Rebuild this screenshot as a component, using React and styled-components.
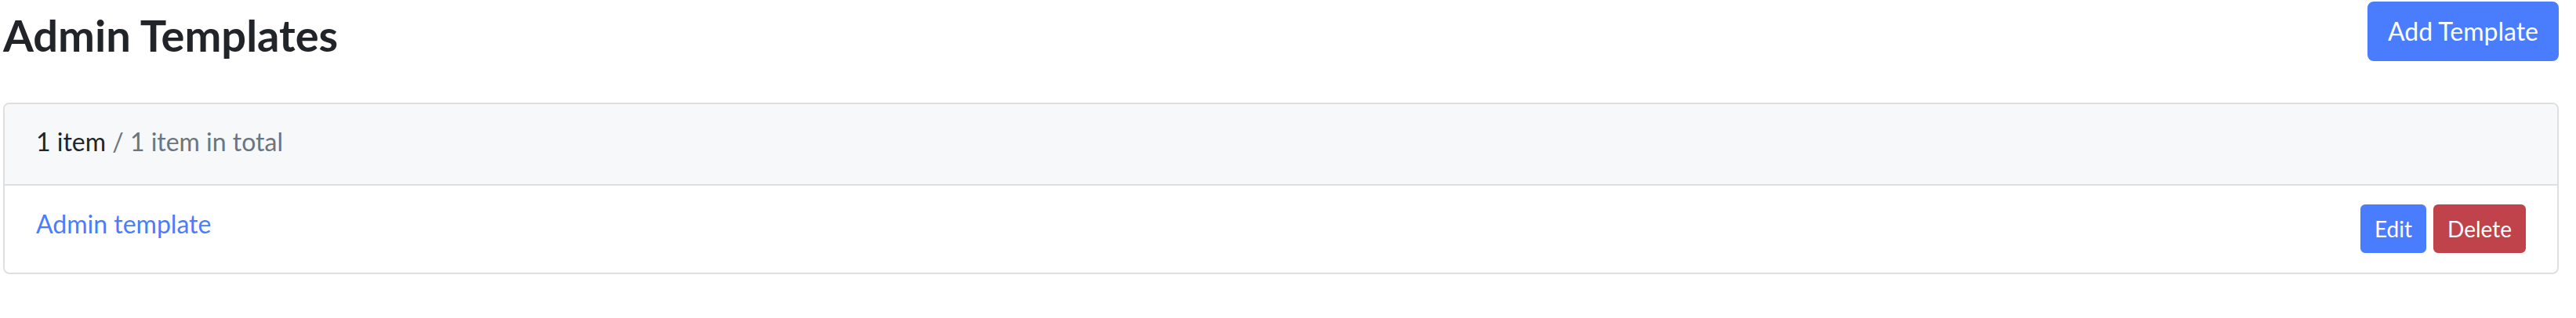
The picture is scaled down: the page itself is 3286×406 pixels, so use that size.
import React from 'react';
import styled, { createGlobalStyle } from 'styled-components';

const GlobalStyle = createGlobalStyle`
  html, body {
    margin: 0;
    padding: 0;
    background: #ffffff;
  }
  body {
    font-family: Lato, 'Open Sans', sans-serif;
    color: #212529;
  }
  * {
    box-sizing: border-box;
  }
`;

const Page = styled.div`
  padding: 2px 22px 0 4px;
`;

const TopBar = styled.div`
  display: flex;
  justify-content: space-between;
  align-items: flex-start;
  height: 129px;
`;

const Title = styled.h1`
  margin: 9px 0 0;
  font-size: 56px;
  font-weight: 700;
  line-height: 1.2;
  color: #212529;
`;

const Button = styled.button`
  font-family: inherit;
  color: #ffffff;
  background: ${(p) => (p.$variant === 'danger' ? '#c0424a' : '#4a7dfd')};
  border: 2px solid ${(p) => (p.$variant === 'danger' ? '#c0424a' : '#4a7dfd')};
  border-radius: ${(p) => (p.$small ? '6px' : '8px')};
  font-size: ${(p) => (p.$small ? '28px' : '32px')};
  line-height: 1.5;
  padding: ${(p) => (p.$small ? '8px 16px' : '12px 24px')};
  cursor: pointer;
`;

const Card = styled.div`
  border: 2px solid #dfdfdf;
  border-radius: 8px;
  overflow: hidden;
`;

const CardHeader = styled.div`
  background: #f7f8fa;
  border-bottom: 2px solid #dfdfdf;
  padding: 24px 40px 30px;
  font-size: 32px;
  line-height: 48px;
`;

const Muted = styled.span`
  color: #6c757d;
`;

const Row = styled.div`
  display: flex;
  justify-content: space-between;
  align-items: center;
  padding: 24px 40px 25px;
`;

const ItemLink = styled.a`
  color: #4a7dfd;
  font-size: 32px;
  line-height: 48px;
  padding-bottom: 12px;
  text-decoration: none;
`;

const Actions = styled.div`
  display: flex;
  gap: 9px;
`;

const templates = [{ id: 1, name: 'Admin template' }];

const App = () => {
  return (
    <Page>
      <GlobalStyle />
      <TopBar>
        <Title>Admin Templates</Title>
        <Button>Add Template</Button>
      </TopBar>
      <Card>
        <CardHeader>
          1 item <Muted>/ 1 item in total</Muted>
        </CardHeader>
        {templates.map((t) => (
          <Row key={t.id}>
            <ItemLink href="#">{t.name}</ItemLink>
            <Actions>
              <Button $small>Edit</Button>
              <Button $small $variant="danger">Delete</Button>
            </Actions>
          </Row>
        ))}
      </Card>
    </Page>
  );
};

export default App;
